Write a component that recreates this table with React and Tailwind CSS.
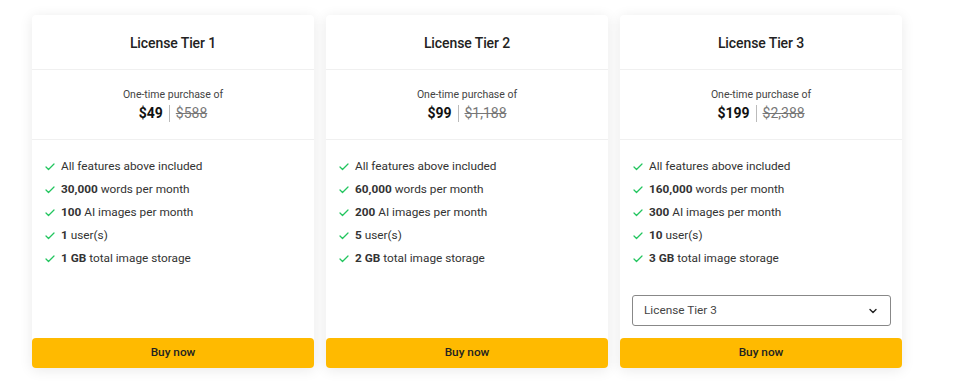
import React from 'react';
import { Check, ChevronDown } from 'lucide-react';

const tiers = [
  {
    name: 'License Tier 1',
    price: '$49',
    was: '$588',
    words: '30,000',
    images: '100',
    users: '1',
    storage: '1 GB',
  },
  {
    name: 'License Tier 2',
    price: '$99',
    was: '$1,188',
    words: '60,000',
    images: '200',
    users: '5',
    storage: '2 GB',
  },
  {
    name: 'License Tier 3',
    price: '$199',
    was: '$2,388',
    words: '160,000',
    images: '300',
    users: '10',
    storage: '3 GB',
    select: true,
  },
];

const Feature = ({ children }) => (
  <li className="flex items-center h-[23px]">
    <Check className="w-[12px] h-[12px] text-[#22c55e] ml-[12px] mr-[5px]" strokeWidth={2.5} />
    <span>{children}</span>
  </li>
);

const TierCard = ({ tier }) => (
  <div className="w-[282px] flex flex-col bg-white rounded-[4px] shadow-[0_2px_14px_rgba(0,0,0,0.09)]">
    <div className="h-[55px] flex items-center justify-center border-b border-[#f0f0f0] pt-[2px]">
      <h2 className="text-[14px] font-medium text-[#222] tracking-[-0.1px]">{tier.name}</h2>
    </div>
    <div className="h-[70px] flex flex-col items-center justify-center border-b border-[#f0f0f0] pt-[1px]">
      <div className="text-[10.5px] leading-[16px] text-[#444]">One-time purchase of</div>
      <div className="flex items-center text-[14px] leading-[20px]">
        <span className="font-bold text-[#111]">{tier.price}</span>
        <span className="w-px h-[17px] bg-[#bbb] mx-[6px]"></span>
        <span className="line-through text-[#777]">{tier.was}</span>
      </div>
    </div>
    <ul className="pt-[15px] text-[11.8px] text-[#333]">
      <Feature>All features above included</Feature>
      <Feature><b className="font-bold">{tier.words}</b> words per month</Feature>
      <Feature><b className="font-bold">{tier.images}</b> AI images per month</Feature>
      <Feature><b className="font-bold">{tier.users}</b> user(s)</Feature>
      <Feature><b className="font-bold">{tier.storage}</b> total image storage</Feature>
    </ul>
    <div className="flex-1"></div>
    {tier.select && (
      <div className="ml-[12px] mr-[11px] mb-[12px] h-[31px] border border-[#888] rounded-[3px] flex items-center justify-between pl-[11px] pr-[11px] text-[11.8px] text-[#444]">
        <span>{tier.name}</span>
        <ChevronDown className="w-[12px] h-[12px] text-[#222]" strokeWidth={2.8} />
      </div>
    )}
    <button className="h-[30px] w-full bg-[#ffba00] rounded-[4px] text-[11.8px] font-medium text-[#222]">
      Buy now
    </button>
  </div>
);

export default function App() {
  return (
    <div
      className="w-[960px] h-[392px] bg-white flex gap-[12px] pl-[32px] pt-[15px] pb-[24px]"
      style={{ fontFamily: 'Roboto, "Liberation Sans", sans-serif' }}
    >
      {tiers.map(t => (
        <TierCard key={t.name} tier={t} />
      ))}
    </div>
  );
}
